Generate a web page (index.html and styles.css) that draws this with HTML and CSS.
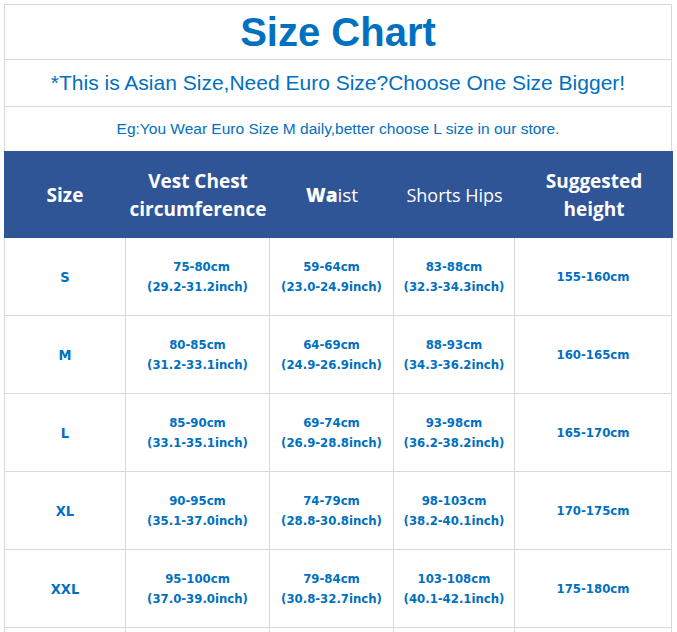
FILE: index.html
```html
<!DOCTYPE html>
<html lang="en">
<head>
<meta charset="utf-8">
<title>Size Chart</title>
<link rel="stylesheet" href="styles.css">
</head>
<body>
<div class="sheet">
  <div class="banner title">Size Chart</div>
  <div class="banner note">*This is Asian Size,Need Euro Size?Choose One Size Bigger!</div>
  <div class="banner eg">Eg:You Wear Euro Size M daily,better choose L size in our store.</div>
  <div class="head">
    <div class="hcell">Size</div>
    <div class="hcell">Vest Chest<br>circumference</div>
    <div class="hcell"><span><b>Wa</b><span class="reg">ist</span></span></div>
    <div class="hcell reg small">Shorts Hips</div>
    <div class="hcell">Suggested<br>height</div>
  </div>
  <div class="grid">
    <div class="cell size">S</div>
    <div class="cell">&nbsp;&nbsp;75-80cm<br>(29.2-31.2inch)</div>
    <div class="cell">59-64cm<br>(23.0-24.9inch)</div>
    <div class="cell">83-88cm<br>(32.3-34.3inch)</div>
    <div class="cell last">155-160cm</div>

    <div class="cell size">M</div>
    <div class="cell">80-85cm<br>(31.2-33.1inch)</div>
    <div class="cell">64-69cm<br>(24.9-26.9inch)</div>
    <div class="cell">88-93cm<br>(34.3-36.2inch)</div>
    <div class="cell last">160-165cm</div>

    <div class="cell size">L</div>
    <div class="cell">85-90cm<br>(33.1-35.1inch)</div>
    <div class="cell">69-74cm<br>(26.9-28.8inch)</div>
    <div class="cell">93-98cm<br>(36.2-38.2inch)</div>
    <div class="cell last">165-170cm</div>

    <div class="cell size">XL</div>
    <div class="cell">90-95cm<br>(35.1-37.0inch)</div>
    <div class="cell">74-79cm<br>(28.8-30.8inch)</div>
    <div class="cell">98-103cm<br>(38.2-40.1inch)</div>
    <div class="cell last">170-175cm</div>

    <div class="cell size">XXL</div>
    <div class="cell">95-100cm<br>(37.0-39.0inch)</div>
    <div class="cell">79-84cm<br>(30.8-32.7inch)</div>
    <div class="cell">103-108cm<br>(40.1-42.1inch)</div>
    <div class="cell last">175-180cm</div>

    <div class="cell"></div>
    <div class="cell"></div>
    <div class="cell"></div>
    <div class="cell"></div>
    <div class="cell last"></div>
  </div>
</div>
</body>
</html>
```
FILE: styles.css
```css
* { box-sizing: border-box; }
html, body { margin: 0; padding: 0; background: #ffffff; }
body { font-family: "Liberation Sans", Arial, sans-serif; }

.sheet {
  margin: 4px 0 0 4px;
  width: 668px;
  border-top: 1px solid #d9d9d9;
  border-left: 1px solid #d9d9d9;
  border-right: 1px solid #d9d9d9;
}

.banner {
  display: flex;
  align-items: center;
  justify-content: center;
  color: #0070c0;
  font-family: "Liberation Sans", Arial, sans-serif;
  white-space: nowrap;
}
.title {
  height: 55px;
  border-bottom: 1px solid #d9d9d9;
  font-size: 40px;
  font-weight: bold;
}
.note {
  height: 47px;
  border-bottom: 1px solid #d9d9d9;
  font-size: 21px;
}
.eg {
  height: 44px;
  font-size: 15.5px;
}

.head {
  display: grid;
  grid-template-columns: 122px 144px 124px 121px 158px;
  height: 87px;
  margin: 0 -2px 0 -1px;
  background: #2f5597;
  color: #ffffff;
  font-family: "Open Sans", "Noto Sans", sans-serif;
  font-size: 19px;
  font-weight: bold;
  line-height: 28px;
}
.hcell {
  display: flex;
  align-items: center;
  justify-content: center;
  text-align: center;
}
.reg { font-weight: normal; }
.small { font-size: 18px; }

.grid {
  display: grid;
  grid-template-columns: 121px 144px 124px 121px 156px;
  grid-auto-rows: 78px;
  color: #0070c0;
  font-family: "DejaVu Sans", Verdana, sans-serif;
  font-stretch: condensed;
  font-weight: bold;
  font-size: 13px;
  line-height: 20px;
}
.cell {
  display: flex;
  align-items: center;
  justify-content: center;
  text-align: center;
  border-right: 1px solid #d9d9d9;
  border-bottom: 1px solid #d9d9d9;
  white-space: nowrap;
}
.cell.size { font-size: 14.5px; }
.cell.last { border-right: none; }
```
